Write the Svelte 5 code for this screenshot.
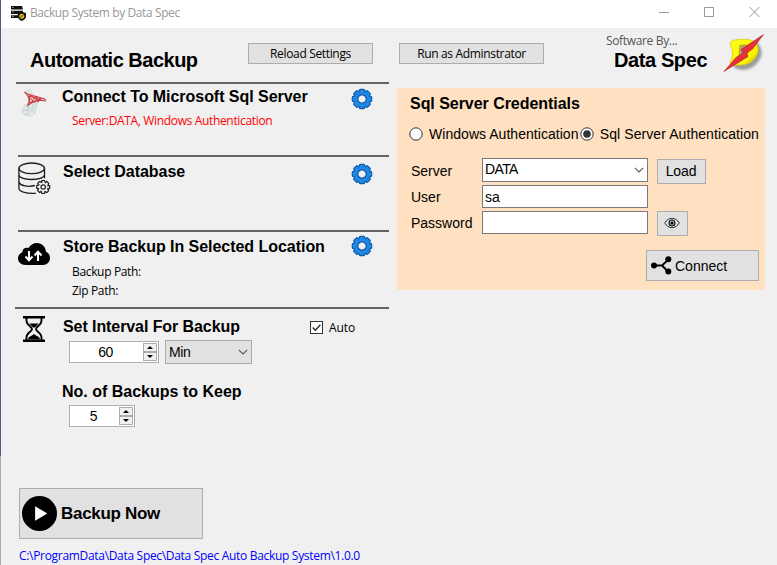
<script>
  let server = $state('DATA');
  let user = $state('sa');
  let password = $state('');
  const teeth = Array.from({ length: 8 }, (_, i) => i * 45);
</script>

{#snippet gear()}
  <svg class="gear" width="22" height="22" viewBox="-11 -11 22 22">
    <g fill="#1e88e5" stroke="#1259ad" stroke-width="1.2">
      {#each teeth as a}<rect x="-2.700" y="-9.700" width="5.400" height="6" rx="1.200" transform="rotate({a})" />{/each}
      <circle r="8.200" />
    </g>
    <circle r="7.700" fill="#1e88e5" />
    {#each teeth as a}<rect x="-2.100" y="-9.100" width="4.200" height="4" rx="1" fill="#1e88e5" transform="rotate({a})" />{/each}
    <circle r="4.200" fill="#f0f0f0" stroke="#1259ad" stroke-width="1.200" />
  </svg>
{/snippet}

{#snippet spin(value, wide)}
  <div class="spin" class:wide>
    <span class="value">{value}</span>
    <span class="arrows">
      <span><svg width="6" height="3" viewBox="0 0 6 3"><path d="M0 3 3 0 6 3Z" /></svg></span>
      <span><svg width="6" height="3" viewBox="0 0 6 3"><path d="M0 0 3 3 6 0Z" /></svg></span>
    </span>
  </div>
{/snippet}

{#snippet chevron()}
  <svg width="10" height="6" viewBox="0 0 10 6"><path d="M.8.8 5 5 9.2.8" fill="none" stroke="#555" stroke-width="1.1" /></svg>
{/snippet}

<div class="window">
  <header>
    <svg class="appicon" width="15" height="15" viewBox="0 0 15 15">
      <path d="M0 0h11l1 3.500H0zM0 4.700h12V8H0zM0 9.200h8V12H0z" fill="#111" />
      <path d="M1 1.500h2M1 6h2M1 10.500h2" stroke="#777" />
      <path d="M10.300 5.700 15 7v3.500c0 2.200-2.300 3.800-4.300 4.500-2-1-3.900-2.400-3.900-4.500V7z" fill="#111" />
      <circle cx="10.800" cy="10.200" r="2.500" fill="#d7b51d" /><path d="m9 11.700 3.600-3" stroke="#443800" stroke-width=".8" />
    </svg>
    <span class="caption">Backup System by Data Spec</span>
    <svg class="controls" width="101" height="12" viewBox="0 0 101 12">
      <path d="M0 6.500h10M45.500 1.500h9v9h-9zM90.500 1l10 10M100.500 1l-10 10" fill="none" stroke="#999" />
    </svg>
  </header>

  <main>
    <div class="left">
      <div class="top">
        <h1>Automatic Backup</h1>
        <button class="ui reload">Reload Settings</button>
      </div>

      <section class="connect">
        <svg class="sqlicon" width="26" height="28" viewBox="0 0 26 28">
          <g fill="#e3eaec" stroke="#c3cfd3" stroke-width=".7">
            <path d="M3 3 9 .5l3 5-5 2zM4 16l7-4 6 1-3 11-4 3-9-3z" />
            <path d="m4 16 4 4 9-7-5 8-11 1 7-2-4 7 8-6 2 3M7 14l1 6M11 12l1 9" fill="none" />
          </g>
          <path d="M3.500 3c4 3 11 4 20.500 7l.5 2c-6-1.500-12 0-18 5 3-6 1-10-3-14Z" fill="#e9c7c9" stroke="#c4393f" />
          <path d="m5 5 9 9M8 16l1-10 9 6M10 14l5-7 2 6 4-4M7 7l13 3-12 4" fill="none" stroke="#c4393f" stroke-width=".9" />
        </svg>
        <div class="info">
          <h2>Connect To Microsoft Sql Server</h2>
          <p class="red">Server:DATA, Windows Authentication</p>
        </div>
        {@render gear()}
      </section>

      <section class="select">
        <svg class="dbicon" width="34" height="34" viewBox="0 0 34 34">
          <g fill="none" stroke="#1c1c1c" stroke-width="1.300">
            <ellipse cx="13.700" cy="6.300" rx="12.800" ry="5.300" />
            <path d="M.9 6.300v20c0 3 6 5.400 17 5M26.500 6.300v10M.9 13c1 6 24.600 6 25.600 0M.9 19.500c1 5 10 5.500 16 4" />
          </g>
          <circle cx="25.200" cy="25" r="8" fill="#f0f0f0" />
          <g transform="translate(25.200 25)" fill="none" stroke="#1c1c1c" stroke-width="1.200">
            {#each teeth as a}<path d="M-1.900-4.800-1.300-6.500H1.300L1.900-4.800" transform="rotate({a})" />{/each}
            <circle r="4.900" stroke-dasharray="1.300 2.550" stroke-dashoffset="-1.270" />
            <circle r="2.200" />
          </g>
        </svg>
        <div class="info"><h2>Select Database</h2></div>
        {@render gear()}
      </section>

      <section class="store">
        <svg class="cloud" width="32" height="22" viewBox="0 0 32 22">
          <path d="M7.500 22C3 22 0 19 0 15.500 0 12.500 2 10 4.500 9.200 4 6 7.500 4 10.500 5 12 2 15.500 0 19 0c5 0 8.500 3.500 9 8.800 2.500 1 4 3.200 4 6.200 0 4-3 7-7 7z" />
          <path d="M11 8v9M7.500 13.500 11 17.200l3.500-3.700M20 18V9M16.500 12.500 20 8.800l3.500 3.700" fill="none" stroke="#fff" stroke-width="2" />
        </svg>
        <div class="info">
          <h2>Store Backup In Selected Location</h2>
          <p>Backup Path:</p>
          <p>Zip Path:</p>
        </div>
        {@render gear()}
      </section>

      <section class="interval">
        <svg class="glass" width="22" height="26" viewBox="0 0 22 26">
          <path d="M0 0h22v2.500H0zM0 23.500h22V26H0z" />
          <path d="M3.500 2v3c0 4 5.500 5.500 5.500 8s-5.500 4-5.500 8v3M18.500 2v3c0 4-5.500 5.500-5.500 8s5.500 4 5.500 8v3" fill="none" stroke="#000" stroke-width="1.900" />
          <path d="M6.500 7.500h9L12 11.500h-2zM5 23.500c0-3 3.500-3 6-5.500 2.500 2.500 6 2.500 6 5.500z" />
        </svg>
        <div class="info">
          <div class="headrow">
            <h2>Set Interval For Backup</h2>
            <svg class="check" width="13" height="13" viewBox="0 0 13 13"><rect x=".5" y=".5" width="12" height="12" fill="#fff" stroke="#333" /><path d="m2.700 6.500 2.700 2.700 5-5.400" fill="none" stroke="#222" stroke-width="1.300" /></svg>
            <span class="auto">Auto</span>
          </div>
          <div class="fields">
            {@render spin('60', true)}
            <div class="unit"><span>Min</span>{@render chevron()}</div>
          </div>
          <h2 class="keep">No. of Backups to Keep</h2>
          <div class="fields second">{@render spin('5', false)}</div>
        </div>
      </section>

      <button class="now">
        <svg width="35" height="35" viewBox="0 0 36 36"><circle cx="18" cy="18" r="18" /><path d="M13.500 10.500v15L26 18z" fill="#fff" /></svg>
        <span>Backup Now</span>
      </button>
      <p class="path">C:\ProgramData\Data Spec\Data Spec Auto Backup System\1.0.0</p>
    </div>

    <div class="right">
      <div class="brandrow">
        <button class="ui admin">Run as Adminstrator</button>
        <div class="brand"><span class="by">Software By...</span><strong>Data Spec</strong></div>
        <svg class="logo" width="44" height="42" viewBox="0 0 44 42">
          <defs>
            <linearGradient id="yl" x1="0" y1="0" x2="1" y2="1"><stop offset="0" stop-color="#ffff20" /><stop offset=".7" stop-color="#fff200" /><stop offset="1" stop-color="#a59500" /></linearGradient>
            <filter id="sh" x="-20%" y="-20%" width="140%" height="140%"><feGaussianBlur stdDeviation="1" /></filter>
          </defs>
          <path d="M11 14 33 9c5 6 6 11 3 17-4 7-10 11-18 11l-8-2z" fill="#888" opacity=".8" filter="url(#sh)" />
          <path d="M7 9c1-2 4-2 8-2.500 7-.7 12 0 15 2.500 4 3 5 8 3 12.500-3 7-9 10.500-17 10.500H9c-3-1-3-3-2-5 2-5 2-9 0-13-1-2-1-4 0-5Z" fill="url(#yl)" stroke="#d8ca10" stroke-width=".8" />
          <path d="M16 12.500c5-1 8-.5 9 2 1 4-3 8.500-10 10z" fill="#aaa98f" stroke="#b8a900" stroke-width="1.200" />
          <path d="M39.500 1.500 17 16.500l2 3.500-7 4.500L0 38.500l24-15-1.500-3.500 6-4Z" fill="#e8303a" stroke="#9c1c1c" stroke-width=".6" />
        </svg>
      </div>

      <div class="panel">
        <h2>Sql Server Credentials</h2>
        <div class="radios">
          <svg width="14" height="14" viewBox="0 0 14 14"><circle cx="7" cy="7" r="6.200" fill="#fff" stroke="#333" /></svg>
          <span class="r1">Windows Authentication</span>
          <svg width="14" height="14" viewBox="0 0 14 14"><circle cx="7" cy="7" r="6.200" fill="#fff" stroke="#333" /><circle cx="7" cy="7" r="3.800" fill="#333" /></svg>
          <span class="r2">Sql Server Authentication</span>
        </div>
        <div class="form">
          <span class="label">Server</span>
          <div class="box combo"><span>{server}</span>{@render chevron()}</div>
          <button class="ui load">Load</button>
          <span class="label">User</span>
          <div class="box">{user}</div>
          <i></i>
          <span class="label">Password</span>
          <div class="box">{password}</div>
          <button class="ui eye" aria-label="Show password">
            <svg width="16" height="12" viewBox="0 0 16 12"><path d="M.8 6C4-.2 12-.2 15.200 6 12 12.200 4 12.200.8 6Z" fill="#e8e8e8" stroke="#333" /><circle cx="8" cy="6" r="3" fill="#b6bccb" stroke="#111" stroke-width="1.100" /><circle cx="8" cy="6" r="1.500" /></svg>
          </button>
        </div>
        <button class="ui connectbtn">
          <svg width="21" height="19" viewBox="0 0 21 19"><path d="M3 9.500h8L17 4M11 9.500l6 6" fill="none" stroke="#000" stroke-width="2" /><circle cx="3" cy="9.500" r="3" /><circle cx="17.300" cy="3.300" r="3" /><circle cx="17.300" cy="15.500" r="3" /></svg>
          <span>Connect</span>
        </button>
      </div>
    </div>
  </main>
</div>

<style>
  :global(body) { margin: 0; overflow: hidden; }
  * { box-sizing: border-box; }
  .window { width: 777px; height: 565px; padding-left: 1px; background: linear-gradient(#55597c 456px, #a9abb5 456px) 0 0 / 1px 100% no-repeat, #f0f0f0; font-family: "Open Sans", "Noto Sans", sans-serif; font-size: 12px; letter-spacing: -.34px; color: #000; overflow: hidden; white-space: nowrap; }
  svg { display: block; flex: none; }
  button { font: inherit; letter-spacing: inherit; color: inherit; padding: 0; margin: 0; border-radius: 0; flex: none; }
  p, h1, h2 { margin: 0; }
  h1, h2, strong, .panel, .now, .spin, .unit { font-family: "Liberation Sans", Arial, sans-serif; letter-spacing: 0; }
  h1 { font-size: 20px; line-height: 24px; letter-spacing: -.5px; width: 218px; padding-top: 20px; }
  h2 { font-size: 16px; line-height: 20px; letter-spacing: -.04px; }
  header { height: 28px; background: #fff; display: flex; padding: 0 14px 0 10px; }
  .appicon { margin-top: 6px; }
  .caption { margin-left: 4px; color: #999; line-height: 26px; letter-spacing: -.4px; }
  .controls { margin: 6px 3px 0 auto; }
  main { display: flex; height: 537px; }
  .left { width: 388px; padding-left: 14px; flex: none; }
  .top { height: 54px; display: flex; padding-left: 15px; }
  .ui { border: 1px solid #adadad; background: #e1e1e1; display: flex; align-items: center; justify-content: center; }
  .reload { width: 125px; height: 21px; margin-top: 15px; }
  section { border-top: 2px solid #646464; display: flex; align-items: flex-start; }
  section .info { flex: 1; }
  .gear { margin: 4px 16px 0 0; }
  .connect { height: 73px; margin-left: 1px; }
  .connect .info { padding: 3px 0 0 15px; }
  .sqlicon { margin: 5px 0 0 5px; }
  .info p { line-height: 16px; padding-left: 9px; }
  .info .red { color: #f00; padding: 6px 0 0 10px; }
  .select { height: 75px; margin-left: 3px; }
  .select .info { padding: 5px 0 0 11px; }
  .dbicon { margin-top: 5px; }
  .select .gear { margin-top: 6px; }
  .store { height: 77px; margin-left: 3px; }
  .store .info { padding: 5px 0 0 13px; }
  .store p { line-height: 19px; }
  .store h2 { margin-bottom: 5px; }
  .cloud { margin-top: 11px; }
  .store .gear { margin-top: 3px; }
  .interval { height: 182px; }
  .glass { margin: 7px 0 0 8px; }
  .interval .info { padding: 8px 0 0 18px; }
  .interval h2 { letter-spacing: -.08px; }
  .headrow { display: flex; height: 20px; }
  .headrow h2 { width: 247px; }
  .check { margin-top: 4px; }
  .auto { margin-left: 6px; line-height: 20px; padding-top: 1px; letter-spacing: -.1px; }
  .fields { display: flex; padding: 3px 0 0 6px; gap: 6px; }
  .spin { width: 66px; height: 22px; margin-top: 1px; border: 1px solid #abadb3; background: #fff; display: flex; padding: 1px; font-size: 14px; letter-spacing: -.5px; }
  .spin.wide { width: 90px; }
  .value { flex: 1; text-align: center; line-height: 18px; padding-right: 3px; }
  .arrows { width: 14px; display: flex; flex-direction: column; }
  .arrows span { flex: 1; border: 1px solid #acacac; background: #f0f0f0; display: flex; align-items: center; justify-content: center; }
  .unit { width: 87px; height: 24px; border: 1px solid #adadad; background: #e1e1e1; display: flex; justify-content: space-between; align-items: center; padding: 0 3px; font-size: 14px; letter-spacing: -.4px; }
  .interval .keep { margin: 18px 0 0 -1px; letter-spacing: 0; }
  .second { padding-top: 2px; }
  .now { width: 184px; height: 51px; margin: -1px 0 0 4px; border: 1px solid #adadad; background: #e1e1e1; display: flex; align-items: center; padding-left: 2px; gap: 4px; font-size: 17px; font-weight: bold; letter-spacing: -.3px; }
  .path { color: #00f; line-height: 20px; padding: 7px 0 0 4px; letter-spacing: -.31px; }

  .right { width: 368px; margin-left: 8px; flex: none; }
  .brandrow { height: 60px; display: flex; }
  .admin { width: 145px; height: 21px; margin: 15px 0 0 2px; }
  .brand { width: 102px; margin: 5px 0 0 62px; display: flex; flex-direction: column; flex: none; }
  .by { line-height: 16px; color: #555; }
  .brand strong { font-size: 20px; line-height: 22px; padding-left: 8px; letter-spacing: -.4px; }
  .logo { margin: 5px 0 0 16px; overflow: visible; }
  .panel { height: 202px; background: #ffe0c0; padding: 6px 6px 0 13px; font-size: 14px; }
  .radios { display: flex; height: 20px; align-items: center; margin-top: 10px; letter-spacing: .04px; }
  .radios svg { margin: -1px 6px 0 -1px; }
  .r1 { width: 153px; }
  .r2 { letter-spacing: .08px; }
  .form { display: grid; grid-template-columns: 71px 166px 58px; grid-template-rows: 25px 23px 25px; row-gap: 2px; padding: 14px 0 0 1px; align-items: center; }
  .form > :nth-child(3n) { margin-left: 9px; }
  .label { line-height: 20px; }
  .box { height: 23px; border: 1px solid #7a7a7a; background: #fff; padding: 0 2px; line-height: 22px; letter-spacing: .1px; }
  .combo { height: 24px; display: flex; justify-content: space-between; align-items: center; align-self: start; padding-right: 3px; letter-spacing: -.6px; }
  .combo span { line-height: 20px; align-self: flex-start; }
  .load { width: 49px; height: 25px; letter-spacing: -.1px; padding-right: 1px; margin-top: 1px; }
  .eye { width: 31px; height: 25px; margin-top: 1px; padding-right: 1px; }
  .connectbtn { width: 113px; height: 31px; margin: 15px 0 0 auto; justify-content: flex-start; padding-left: 4px; gap: 3px; }
</style>
